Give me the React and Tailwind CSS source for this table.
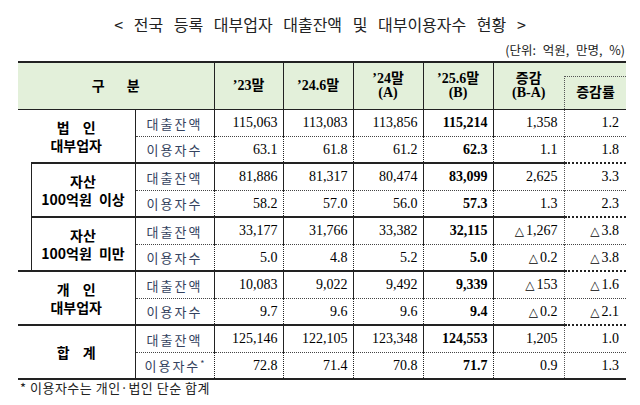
const serif = 'font-["Liberation_Serif","Noto_Sans_CJK_KR",serif]';
const sans = 'font-["Noto_Sans_CJK_KR","Liberation_Sans",sans-serif]';

// 그룹별 데이터 (대출잔액 / 이용자수)
const groups = [
  {
    key: 'corp',
    label: [['법', '인'], '대부업자'],
    rows: [
      ['대출잔액', '115,063', '113,083', '113,856', '115,214', '1,358', '1.2'],
      ['이용자수', '63.1', '61.8', '61.2', '62.3', '1.1', '1.8'],
    ],
  },
  {
    key: 'big',
    sub: true,
    first: true,
    label: ['자산', '100억원 이상'],
    rows: [
      ['대출잔액', '81,886', '81,317', '80,474', '83,099', '2,625', '3.3'],
      ['이용자수', '58.2', '57.0', '56.0', '57.3', '1.3', '2.3'],
    ],
  },
  {
    key: 'small',
    sub: true,
    label: ['자산', '100억원 미만'],
    rows: [
      ['대출잔액', '33,177', '31,766', '33,382', '32,115', '△1,267', '△3.8'],
      ['이용자수', '5.0', '4.8', '5.2', '5.0', '△0.2', '△3.8'],
    ],
  },
  {
    key: 'person',
    label: [['개', '인'], '대부업자'],
    rows: [
      ['대출잔액', '10,083', '9,022', '9,492', '9,339', '△153', '△1.6'],
      ['이용자수', '9.7', '9.6', '9.6', '9.4', '△0.2', '△2.1'],
    ],
  },
  {
    key: 'total',
    label: [['합', '계']],
    rows: [
      ['대출잔액', '125,146', '122,105', '123,348', '124,553', '1,205', '1.0'],
      ['이용자수*', '72.8', '71.4', '70.8', '71.7', '0.9', '1.3'],
    ],
  },
];

function GroupLabel({ label }) {
  return (
    <div className={`${sans} text-[14px] font-bold leading-[18px] text-black flex flex-col items-center [word-spacing:4px]`}>
      {label.map((l, i) =>
        Array.isArray(l) ? (
          <div key={i} className="flex gap-[13px]">
            <span>{l[0]}</span>
            <span>{l[1]}</span>
          </div>
        ) : (
          <div key={i}>{l}</div>
        ),
      )}
    </div>
  );
}

function SubLabel({ text }) {
  const star = text.endsWith('*');
  const t = star ? text.slice(0, -1) : text;
  return (
    <span className={`${sans} text-[13px] tracking-[2px] text-[#34425e]`}>
      {t}
      {star && <sup className="text-[9px] tracking-normal">*</sup>}
    </span>
  );
}

// △ 표시는 작게
function Num({ v }) {
  if (!v.startsWith('△')) return v;
  return (
    <>
      <span className='font-["DejaVu_Sans",sans-serif] text-[12px] mr-[2px]'>△</span>
      {v.slice(1)}
    </>
  );
}

export default function App() {
  return (
    <div className="w-[640px] h-[405px] bg-white overflow-hidden">
      <div className={`${sans} pt-[12px] text-center text-[16px] leading-[24px] text-[#222] [word-spacing:7px]`}>
        &lt; 전국 등록 대부업자 대출잔액 및 대부이용자수 현황 &gt;
      </div>
      <div className={`${sans} mt-[6px] mb-[3px] pr-[15px] text-right text-[12.5px] leading-[16px] text-[#222] [word-spacing:4px]`}>
        (단위: 억원, 만명, %)
      </div>

      <table className="ml-[18px] w-[608px] table-fixed border-collapse">
        <colgroup>
          <col className="w-[13px]" />
          <col className="w-[104px]" />
          <col className="w-[79px]" />
          <col className="w-[69px]" />
          <col className="w-[70px]" />
          <col className="w-[70px]" />
          <col className="w-[70px]" />
          <col className="w-[71px]" />
          <col className="w-[62px]" />
        </colgroup>
        <thead>
          <tr className={`h-[47px] bg-[#e3f0da] ${serif} text-[14px] font-bold leading-[14px] text-black`}>
            <th colSpan={3} className="border-t-2 border-b border-r border-[#222] p-0 font-bold">
              <span className={`${sans} inline-flex gap-[22px] text-[14px]`}>
                <span>구</span>
                <span>분</span>
              </span>
            </th>
            <th className="border-t-2 border-b border-r border-[#222] p-0 font-bold">’23말</th>
            <th className="border-t-2 border-b border-r border-[#222] p-0 font-bold">’24.6말</th>
            <th className="border-t-2 border-b border-r border-[#222] p-0 font-bold">
              ’24말
              <br />
              (A)
            </th>
            <th className="border-t-2 border-b border-r border-[#222] p-0 font-bold">
              ’25.6말
              <br />
              (B)
            </th>
            <th className="border-t-2 border-b border-[#222] p-0 font-bold">
              증감
              <br />
              (B-A)
            </th>
            <th className="border-t-2 border-b border-[#222] p-0 align-bottom font-bold">
              <div className="h-[33px] border-l border-t border-dotted border-[#555] flex items-center justify-center">
                증감률
              </div>
            </th>
          </tr>
        </thead>
        <tbody>
          {groups.map((g) =>
            g.rows.map((r, ri) => {
              const top = ri === 0;
              const edge = top
                ? g.key === 'corp'
                  ? 'border-t border-t-[#222]'
                  : 'border-t-2 border-t-[#222]'
                : 'border-t border-dotted border-t-[#444]';
              return (
                <tr key={g.key + ri} className="h-[27px]">
                  {top && g.first && (
                    <td rowSpan={4} className="border-r border-r-[#222] p-0" />
                  )}
                  {top && (
                    <td
                      rowSpan={2}
                      colSpan={g.sub ? 1 : 2}
                      className={`p-0 border-r border-r-[#222] ${
                        g.key === 'corp' ? 'border-t border-t-[#222]' : 'border-t-2 border-t-[#222]'
                      }`}
                    >
                      <GroupLabel label={g.label} />
                    </td>
                  )}
                  <td className={`p-0 text-center border-r border-r-[#222] ${edge}`}>
                    <SubLabel text={r[0]} />
                  </td>
                  {r.slice(1).map((v, ci) => (
                    <td
                      key={ci}
                      className={`p-0 text-right ${serif} text-[14px] text-black ${edge} ${
                        ci < 4 ? 'border-r border-r-[#222] pr-[5px]' : ''
                      } ${ci === 3 ? 'font-bold' : ''} ${
                        ci === 5 ? 'border-l border-dotted border-l-[#555] pr-[7px]' : ''
                      } ${ci === 4 ? 'pr-[6px]' : ''}`}
                    >
                      <Num v={v} />
                    </td>
                  ))}
                </tr>
              );
            }),
          )}
          <tr className="h-0">
            <td colSpan={9} className="border-t-2 border-t-[#222] p-0" />
          </tr>
        </tbody>
      </table>

      <div className={`${sans} pl-[20px] text-[13px] leading-[16px] tracking-[0.5px] text-[#222]`}>
        * 이용자수는 개인·법인 단순 합계
      </div>
    </div>
  );
}
